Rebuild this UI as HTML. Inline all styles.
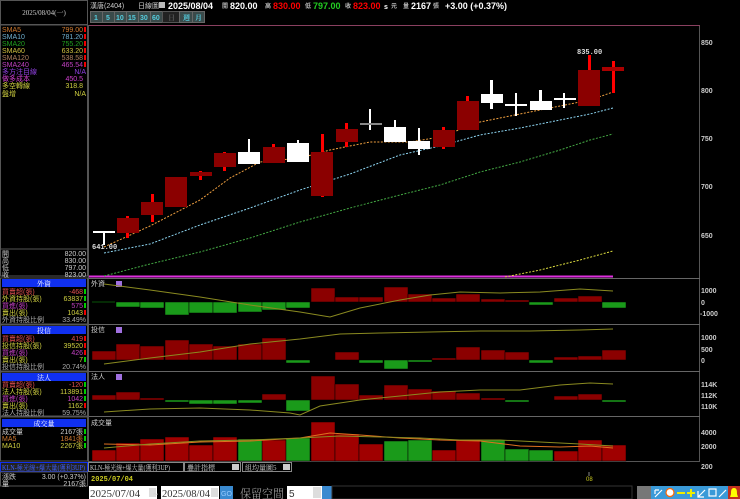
<!DOCTYPE html>
<html><head><meta charset="utf-8"><style>
html,body{margin:0;padding:0;background:#000;width:740px;height:499px;overflow:hidden}
svg{display:block}
text{font-family:"Liberation Sans","Noto Sans CJK TC",sans-serif}
.s{font-family:"Liberation Serif","Noto Serif CJK SC",serif;font-size:7px}
.m{font-family:"Liberation Mono","Noto Sans CJK TC",monospace}
</style></head><body>
<svg width="740" height="499" viewBox="0 0 740 499" xmlns="http://www.w3.org/2000/svg">
<rect width="740" height="499" fill="#000"/>
<rect x="0.5" y="0.5" width="87" height="24" fill="none" stroke="#555"/>
<text x="44" y="15" fill="#ccc" class="s" text-anchor="middle">2025/08/04(一)</text>
<rect x="0.5" y="25" width="87" height="224" fill="none" stroke="#555"/>
<g class="s">
<text x="2" y="32" fill="#d07a30">SMA5</text><text x="83" y="32" fill="#d07a30" text-anchor="end">799.00</text>
<text x="2" y="39" fill="#70b0d0">SMA10</text><text x="83" y="39" fill="#70b0d0" text-anchor="end">781.20</text>
<text x="2" y="46" fill="#20a020">SMA20</text><text x="83" y="46" fill="#20a020" text-anchor="end">755.20</text>
<text x="2" y="53" fill="#d0c040">SMA60</text><text x="83" y="53" fill="#d0c040" text-anchor="end">633.20</text>
<text x="2" y="60" fill="#b08060">SMA120</text><text x="83" y="60" fill="#b08060" text-anchor="end">538.58</text>
<text x="2" y="67" fill="#c040c0">SMA240</text><text x="83" y="67" fill="#c040c0" text-anchor="end">465.54</text>
<text x="2" y="74" fill="#9040e0">多方注目線</text><text x="86" y="74" fill="#9040e0" text-anchor="end">N/A</text>
<text x="2" y="81" fill="#d040d0">做多成本</text><text x="83" y="81" fill="#d040d0" text-anchor="end">450.5</text>
<text x="2" y="88" fill="#d0d040">多空轉線</text><text x="83" y="88" fill="#d0d040" text-anchor="end">318.8</text>
<text x="2" y="96" fill="#d0d040">盤增</text><text x="86" y="96" fill="#d0d040" text-anchor="end">N/A</text>
</g>
<g fill="#e00"><rect x="84" y="27" width="2" height="5"/><rect x="84" y="34" width="2" height="5"/><rect x="84" y="41" width="2" height="5"/><rect x="84" y="48" width="2" height="5"/><rect x="84" y="55" width="2" height="5"/><rect x="84" y="62" width="2" height="5"/></g>
<rect x="0.5" y="249" width="87" height="27" fill="none" stroke="#555"/>
<g class="s" fill="#ccc">
<text x="2" y="256">開</text><text x="86" y="256" text-anchor="end">820.00</text>
<text x="2" y="263">高</text><text x="86" y="263" text-anchor="end">830.00</text>
<text x="2" y="270">低</text><text x="86" y="270" text-anchor="end">797.00</text>
<text x="2" y="277">收</text><text x="86" y="277" text-anchor="end">823.00</text>
</g>
<rect x="0.5" y="278" width="87" height="46" fill="none" stroke="#555"/>
<rect x="2" y="279" width="84" height="8" fill="#1030f0"/>
<text x="44" y="286" fill="#fff" class="s" text-anchor="middle">外資</text>
<g class="s">
<text x="2" y="294" fill="#e05050">買賣超(張)</text><text x="83" y="294" fill="#e05050" text-anchor="end">-468</text>
<text x="2" y="301" fill="#d0d040">外資持股(張)</text><text x="83" y="301" fill="#d0d040" text-anchor="end">63837</text>
<text x="2" y="308" fill="#c040c0">買進(張)</text><text x="83" y="308" fill="#c040c0" text-anchor="end">575</text>
<text x="2" y="315" fill="#d0d040">賣出(張)</text><text x="83" y="315" fill="#d0d040" text-anchor="end">1043</text>
<text x="2" y="322" fill="#aaa">外資持股比例</text><text x="86" y="322" fill="#aaa" text-anchor="end">33.49%</text>
</g>
<g><rect x="84" y="289" width="2" height="5" fill="#0c0"/><rect x="84" y="296" width="2" height="5" fill="#0c0"/><rect x="84" y="303" width="2" height="5" fill="#0c0"/><rect x="84" y="310" width="2" height="5" fill="#e00"/></g>
<rect x="0.5" y="325" width="87" height="46" fill="none" stroke="#555"/>
<rect x="2" y="326" width="84" height="8" fill="#1030f0"/>
<text x="44" y="333" fill="#fff" class="s" text-anchor="middle">投信</text>
<g class="s">
<text x="2" y="341" fill="#e05050">買賣超(張)</text><text x="83" y="341" fill="#e05050" text-anchor="end">419</text>
<text x="2" y="348" fill="#d0d040">投信持股(張)</text><text x="83" y="348" fill="#d0d040" text-anchor="end">39520</text>
<text x="2" y="355" fill="#c040c0">買進(張)</text><text x="83" y="355" fill="#c040c0" text-anchor="end">426</text>
<text x="2" y="362" fill="#d0d040">賣出(張)</text><text x="83" y="362" fill="#d0d040" text-anchor="end">7</text>
<text x="2" y="369" fill="#aaa">投信持股比例</text><text x="86" y="369" fill="#aaa" text-anchor="end">20.74%</text>
</g>
<g><rect x="84" y="336" width="2" height="5" fill="#e00"/><rect x="84" y="343" width="2" height="5" fill="#e00"/><rect x="84" y="350" width="2" height="5" fill="#e00"/><rect x="84" y="357" width="2" height="5" fill="#0c0"/></g>
<rect x="0.5" y="372" width="87" height="44" fill="none" stroke="#555"/>
<rect x="2" y="373" width="84" height="8" fill="#1030f0"/>
<text x="44" y="380" fill="#fff" class="s" text-anchor="middle">法人</text>
<g class="s">
<text x="2" y="387" fill="#e05050">買賣超(張)</text><text x="83" y="387" fill="#e05050" text-anchor="end">-120</text>
<text x="2" y="394" fill="#d0d040">法人持股(張)</text><text x="83" y="394" fill="#d0d040" text-anchor="end">113891</text>
<text x="2" y="401" fill="#c040c0">買進(張)</text><text x="83" y="401" fill="#c040c0" text-anchor="end">1042</text>
<text x="2" y="408" fill="#d0d040">賣出(張)</text><text x="83" y="408" fill="#d0d040" text-anchor="end">1162</text>
<text x="2" y="415" fill="#aaa">法人持股比例</text><text x="86" y="415" fill="#aaa" text-anchor="end">59.75%</text>
</g>
<g><rect x="84" y="382" width="2" height="5" fill="#0c0"/><rect x="84" y="389" width="2" height="5" fill="#0c0"/><rect x="84" y="396" width="2" height="5" fill="#0c0"/><rect x="84" y="403" width="2" height="5" fill="#e00"/></g>
<rect x="0.5" y="417" width="87" height="44" fill="none" stroke="#555"/>
<rect x="2" y="419" width="84" height="8" fill="#1030f0"/>
<text x="44" y="426" fill="#fff" class="s" text-anchor="middle">成交量</text>
<g class="s">
<text x="2" y="434" fill="#ccc">成交量</text><text x="83" y="434" fill="#ccc" text-anchor="end">2167張</text>
<text x="2" y="441" fill="#d07a30">MA5</text><text x="83" y="441" fill="#d07a30" text-anchor="end">1841張</text>
<text x="2" y="448" fill="#d0d040">MA10</text><text x="83" y="448" fill="#d0d040" text-anchor="end">2267張</text>
</g>
<g><rect x="84" y="429" width="2" height="5" fill="#0c0"/><rect x="84" y="436" width="2" height="5" fill="#0c0"/><rect x="84" y="443" width="2" height="5" fill="#0c0"/></g>
<rect x="0" y="462" width="88" height="10" fill="#222"/>
<rect x="0.5" y="462.5" width="87" height="9" fill="none" stroke="#1030f0"/>
<text x="2" y="470" fill="#4060ff" class="s" textLength="83" lengthAdjust="spacingAndGlyphs">KLN-極光線+爆大量(獲利3UP)</text>
<rect x="0.5" y="472" width="87" height="14" fill="none" stroke="#555"/>
<g class="s" fill="#ccc"><text x="2" y="479">漲跌</text><text x="86" y="479" text-anchor="end">3.00 (+0.37%)</text>
<text x="2" y="486">量</text><text x="86" y="486" text-anchor="end">2167張</text></g>

<g class="s" fill="#ccc">
<text x="90" y="8">漢唐(2404)</text><text x="138" y="8">日線圖</text>
</g>
<rect x="159" y="2" width="6" height="6" fill="#bbb"/>
<g font-weight="bold" font-size="9" class="m">
<text x="168" y="9" fill="#fff">2025/08/04</text>
<text x="222" y="8" fill="#bbb" font-size="6">開</text><text x="230" y="9" fill="#fff">820.00</text>
<text x="265" y="8" fill="#bbb" font-size="6">高</text><text x="273" y="9" fill="#f00">830.00</text>
<text x="305" y="8" fill="#bbb" font-size="6">低</text><text x="313" y="9" fill="#2c2">797.00</text>
<text x="345" y="8" fill="#bbb" font-size="6">收</text><text x="353" y="9" fill="#f00">823.00</text>
<text x="384" y="9" fill="#fff" font-size="7">s</text><text x="391" y="8" fill="#bbb" font-size="6">元</text>
<text x="403" y="8" fill="#bbb" font-size="6">量</text><text x="411" y="9" fill="#fff">2167</text>
<text x="433" y="8" fill="#bbb" font-size="6">張</text><text x="445" y="9" fill="#fff">+3.00 (+0.37%)</text>
</g>
<g font-size="7" fill="#5cd" font-weight="bold">
<rect x="90" y="11" width="115" height="12" fill="#444"/>
<rect x="90.5" y="11.5" width="12" height="11" fill="#3a4a4a" stroke="#666"/><text x="94" y="20">1</text>
<rect x="102.5" y="11.5" width="12" height="11" fill="#3a4a4a" stroke="#666"/><text x="106" y="20">5</text>
<rect x="114.5" y="11.5" width="12" height="11" fill="#3a4a4a" stroke="#666"/><text x="116" y="20">10</text>
<rect x="126.5" y="11.5" width="12" height="11" fill="#3a4a4a" stroke="#666"/><text x="128" y="20">15</text>
<rect x="138.5" y="11.5" width="12" height="11" fill="#3a4a4a" stroke="#666"/><text x="140" y="20">30</text>
<rect x="150.5" y="11.5" width="12" height="11" fill="#3a4a4a" stroke="#666"/><text x="152" y="20">60</text>
<rect x="162.5" y="11.5" width="17" height="11" fill="#222" stroke="#555"/><text x="168" y="20" fill="#555" class="s">日</text>
<rect x="179.5" y="11.5" width="13" height="11" fill="#3a4a4a" stroke="#666"/><text x="183" y="20" class="s">週</text>
<rect x="192.5" y="11.5" width="12" height="11" fill="#3a4a4a" stroke="#666"/><text x="195" y="20" class="s">月</text>
</g>

<rect x="88.5" y="25.5" width="611" height="436" fill="none" stroke="#555"/>
<line x1="89" y1="25.5" x2="700" y2="25.5" stroke="#8a4060"/>
<line x1="89" y1="278.5" x2="700" y2="278.5" stroke="#666"/>
<line x1="89" y1="324.5" x2="700" y2="324.5" stroke="#666"/>
<line x1="89" y1="371.5" x2="700" y2="371.5" stroke="#666"/>
<line x1="89" y1="416.5" x2="700" y2="416.5" stroke="#666"/>
<line x1="89" y1="276.5" x2="613" y2="276.5" stroke="#e030e0" stroke-width="2"/>
<g font-size="7" fill="#ccc" class="m" font-weight="bold">
<text x="701" y="45">850</text><text x="701" y="93">800</text><text x="701" y="141">750</text><text x="701" y="189">700</text><text x="701" y="238">650</text>
<text x="701" y="293">1000</text><text x="701" y="305">0</text><text x="700" y="316">-1000</text>
<text x="701" y="340">1000</text><text x="701" y="352">500</text><text x="701" y="363">0</text>
<text x="701" y="387">114K</text><text x="701" y="398">112K</text><text x="701" y="409">110K</text>
<text x="701" y="435">4000</text><text x="701" y="449">2000</text><text x="701" y="469">200</text>
</g>
<polyline fill="none" stroke="#4a4" stroke-width="1" stroke-dasharray="2,1.5" points="104,276 150,264 200,252 250,238 300,222 350,208 400,195 440,185 480,172 520,162 560,150 590,140 613,134"/>
<polyline fill="none" stroke="#8cd4f0" stroke-width="1" stroke-dasharray="2,1.5" points="104,253 150,244 200,225 250,208 300,190 350,174 400,155 440,146 480,135 520,128 560,120 590,114 613,108"/>
<polyline fill="none" stroke="#f0a040" stroke-width="1" stroke-dasharray="2,1.5" points="104,247 150,226 200,200 230,178 260,162 300,158 330,150 370,142 410,142 440,137 480,122 520,114 560,106 590,100 613,92"/>
<polyline fill="none" stroke="#e0e040" stroke-width="1" stroke-dasharray="2,1.5" points="505,277 540,270 580,260 613,251"/>
<g fill="#8b0000">
<rect x="93" y="231" width="22" height="2" fill="#fff"/><rect x="103" y="231" width="2" height="14" fill="#fff"/>
<rect x="126" y="216" width="3" height="22" fill="#f00"/><rect x="117" y="218" width="22" height="15"/>
<rect x="151" y="194" width="3" height="28" fill="#f00"/><rect x="141" y="202" width="22" height="13"/>
<rect x="165" y="177" width="22" height="30"/>
<rect x="199" y="171" width="3" height="9" fill="#f00"/><rect x="190" y="172" width="22" height="4"/>
<rect x="223" y="152" width="3" height="19" fill="#f00"/><rect x="214" y="153" width="22" height="14"/>
<rect x="248" y="139" width="2" height="13" fill="#fff"/><rect x="238" y="152" width="22" height="12" fill="#fff"/>
<rect x="272" y="144" width="3" height="19" fill="#f00"/><rect x="263" y="147" width="22" height="16"/>
<rect x="297" y="140" width="2" height="10" fill="#fff"/><rect x="287" y="143" width="22" height="19" fill="#fff"/>
<rect x="321" y="134" width="3" height="63" fill="#f00"/><rect x="311" y="152" width="22" height="44"/>
<rect x="345" y="123" width="3" height="24" fill="#f00"/><rect x="336" y="129" width="22" height="13"/>
<rect x="369" y="109" width="2" height="21" fill="#fff"/><rect x="360" y="123" width="22" height="2" fill="#888"/>
<rect x="394" y="120" width="2" height="8" fill="#fff"/><rect x="384" y="127" width="22" height="15" fill="#fff"/>
<rect x="418" y="128" width="2" height="27" fill="#fff"/><rect x="408" y="141" width="22" height="8" fill="#fff"/>
<rect x="442" y="127" width="3" height="22" fill="#f00"/><rect x="433" y="130" width="22" height="17"/>
<rect x="466" y="96" width="3" height="6" fill="#f00"/><rect x="457" y="101" width="22" height="29"/>
<rect x="490" y="80" width="3" height="29" fill="#fff"/><rect x="481" y="94" width="22" height="9" fill="#fff"/>
<rect x="515" y="93" width="2" height="23" fill="#fff"/><rect x="505" y="104" width="22" height="2" fill="#fff"/>
<rect x="539" y="90" width="3" height="14" fill="#fff"/><rect x="530" y="101" width="22" height="9" fill="#fff"/>
<rect x="563" y="93" width="2" height="15" fill="#fff"/><rect x="554" y="98" width="22" height="2" fill="#fff"/>
<rect x="588" y="55" width="3" height="16" fill="#f00"/><rect x="578" y="70" width="22" height="36"/>
<rect x="612" y="61" width="3" height="32" fill="#f00"/><rect x="602" y="67" width="22" height="4" fill="#a00"/>
</g>
<text x="92" y="249" fill="#ddd" font-size="7" class="m" font-weight="bold">641.00</text>
<text x="577" y="54" fill="#ddd" font-size="7" class="m" font-weight="bold">835.00</text>

<g class="s" fill="#ccc">
<text x="91" y="286">外資</text><text x="91" y="332">投信</text><text x="91" y="379">法人</text><text x="91" y="425">成交量</text>
</g>
<g fill="#a070e0"><rect x="116" y="281" width="6" height="6"/><rect x="116" y="327" width="6" height="6"/><rect x="116" y="374" width="6" height="6"/></g>

<g stroke="#000" stroke-width="0.5">
<line x1="92" y1="302" x2="115" y2="302" stroke="#1a1"/>
<g fill="#1a9a1a"><rect x="116" y="302" width="24" height="5"/><rect x="140" y="302" width="24" height="6"/><rect x="165" y="302" width="24" height="13"/><rect x="189" y="302" width="24" height="11"/><rect x="213" y="302" width="24" height="11"/><rect x="238" y="302" width="24" height="10"/><rect x="262" y="302" width="24" height="8"/><rect x="286" y="302" width="24" height="6"/><rect x="529" y="302" width="24" height="3"/><rect x="602" y="302" width="24" height="6"/></g>
<g fill="#8b0000"><rect x="311" y="288" width="24" height="14"/><rect x="335" y="297" width="24" height="5"/><rect x="359" y="297" width="24" height="5"/><rect x="384" y="287" width="24" height="15"/><rect x="408" y="294" width="24" height="8"/><rect x="432" y="298" width="24" height="4"/><rect x="456" y="294" width="24" height="8"/><rect x="481" y="299" width="24" height="3"/><rect x="505" y="300" width="24" height="2"/><rect x="554" y="298" width="24" height="4"/><rect x="578" y="296" width="24" height="6"/></g>
</g>
<polyline fill="none" stroke="#8a8a20" points="104,284 150,290 200,297 250,305 300,312 330,317 360,308 400,300 430,295 460,292 500,293 540,292 580,289 613,291"/>
<g stroke="#000" stroke-width="0.5">
<g fill="#8b0000"><rect x="92" y="351" width="24" height="9"/><rect x="116" y="344" width="24" height="16"/><rect x="140" y="346" width="24" height="14"/><rect x="165" y="340" width="24" height="20"/><rect x="189" y="344" width="24" height="16"/><rect x="213" y="346" width="24" height="14"/><rect x="238" y="344" width="24" height="16"/><rect x="262" y="338" width="24" height="22"/><rect x="335" y="352" width="24" height="8"/><rect x="432" y="358" width="24" height="2"/><rect x="456" y="347" width="24" height="13"/><rect x="481" y="350" width="24" height="10"/><rect x="505" y="352" width="24" height="8"/><rect x="554" y="357" width="24" height="3"/><rect x="578" y="356" width="24" height="4"/><rect x="602" y="350" width="24" height="10"/></g>
<g fill="#1a9a1a"><rect x="286" y="360" width="24" height="3"/><rect x="359" y="360" width="24" height="3"/><rect x="384" y="360" width="24" height="9"/><rect x="408" y="360" width="24" height="2"/><rect x="529" y="360" width="24" height="3"/></g>
</g>
<polyline fill="none" stroke="#8a8a20" points="104,364 150,358 200,352 250,344 300,339 340,334 380,333 430,332 480,331 530,331 580,330 613,329"/>
<g stroke="#000" stroke-width="0.5">
<g fill="#8b0000"><rect x="92" y="395" width="24" height="5"/><rect x="116" y="392" width="24" height="8"/><rect x="140" y="398" width="24" height="2"/><rect x="262" y="394" width="24" height="6"/><rect x="311" y="376" width="24" height="24"/><rect x="335" y="384" width="24" height="16"/><rect x="359" y="395" width="24" height="5"/><rect x="384" y="385" width="24" height="15"/><rect x="408" y="389" width="24" height="11"/><rect x="432" y="391" width="24" height="9"/><rect x="456" y="393" width="24" height="7"/><rect x="481" y="398" width="24" height="2"/><rect x="554" y="396" width="24" height="4"/><rect x="578" y="394" width="24" height="6"/></g>
<g fill="#1a9a1a"><rect x="165" y="400" width="24" height="2"/><rect x="189" y="400" width="24" height="4"/><rect x="213" y="400" width="24" height="4"/><rect x="238" y="400" width="24" height="3"/><rect x="286" y="400" width="24" height="11"/><rect x="505" y="400" width="24" height="2"/><rect x="602" y="400" width="24" height="2"/></g>
</g>
<polyline fill="none" stroke="#8a8a20" points="104,412 150,409 200,408 250,410 290,413 300,415 320,406 360,400 400,396 440,392 480,390 520,390 560,385 590,383 613,384"/>
<g stroke="#000" stroke-width="0.5">
<g fill="#a00000"><rect x="92" y="450" width="24" height="11"/><rect x="116" y="443" width="24" height="18"/><rect x="140" y="439" width="24" height="22"/><rect x="165" y="437" width="24" height="24"/><rect x="189" y="445" width="24" height="16"/><rect x="213" y="437" width="24" height="24"/><rect x="262" y="440" width="24" height="21"/><rect x="311" y="422" width="24" height="39"/><rect x="335" y="434" width="24" height="27"/><rect x="359" y="444" width="24" height="17"/><rect x="432" y="450" width="24" height="11"/><rect x="456" y="440" width="24" height="21"/><rect x="554" y="451" width="24" height="10"/><rect x="578" y="440" width="24" height="21"/><rect x="602" y="445" width="24" height="16"/></g>
<g fill="#1a9a1a"><rect x="238" y="439" width="24" height="22"/><rect x="286" y="438" width="24" height="23"/><rect x="384" y="441" width="24" height="20"/><rect x="408" y="440" width="24" height="21"/><rect x="481" y="440" width="24" height="21"/><rect x="505" y="449" width="24" height="12"/><rect x="529" y="450" width="24" height="11"/></g>
</g>
<polyline fill="none" stroke="#e07020" points="104,444 150,445 200,442 250,441 300,438 330,433 360,435 400,438 440,440 480,441 520,446 560,447 590,446 613,448"/>
<polyline fill="none" stroke="#8a8a20" points="104,448 150,444 200,441 250,440 300,438 340,436 380,437 420,438 460,440 500,440 540,442 580,444 613,446"/>

<rect x="88" y="462" width="612" height="10" fill="#000"/>
<rect x="88.5" y="462.5" width="95" height="9" fill="none" stroke="#888"/>
<text x="90" y="470" fill="#ccc" class="s" textLength="80" lengthAdjust="spacingAndGlyphs">KLN-極光線+爆大量(獲利3UP)</text>
<rect x="184.5" y="462.5" width="56" height="9" fill="none" stroke="#888"/>
<text x="187" y="470" fill="#ccc" class="s">疊計指標</text><rect x="232" y="464" width="7" height="6" fill="#ccc"/>
<rect x="242.5" y="462.5" width="49" height="9" fill="none" stroke="#888"/>
<text x="245" y="470" fill="#ccc" class="s">組均量圖5</text><rect x="283" y="464" width="7" height="6" fill="#ccc"/>
<text x="91" y="481" fill="#cccc20" font-size="7" font-weight="bold" class="m">2025/07/04</text>
<text x="586" y="481" fill="#cccc20" font-size="6">08</text>
<line x1="589" y1="472" x2="589" y2="476" stroke="#888"/>
<rect x="89" y="486" width="68" height="13" fill="#fff"/><text x="90" y="497" fill="#333" class="s" style="font-size:11px">2025/07/04</text><rect x="149" y="488" width="7" height="9" fill="#ddd"/>
<text x="153" y="497" fill="#ccc" font-size="9">~</text>
<rect x="161" y="486" width="58" height="13" fill="#fff"/><text x="162" y="497" fill="#333" class="s" style="font-size:11px" textLength="48" lengthAdjust="spacingAndGlyphs">2025/08/04</text><rect x="211" y="488" width="7" height="9" fill="#ddd"/>
<rect x="220" y="486" width="13" height="13" fill="#3a8ad0"/><text x="221" y="496" fill="#9cf" font-size="7">GO</text>
<text x="240" y="498" fill="#999" class="s" style="font-size:12px" textLength="44" lengthAdjust="spacingAndGlyphs">保留空間</text>
<rect x="287" y="486" width="35" height="13" fill="#fff"/><text x="289" y="497" fill="#333" font-size="10">5</text><rect x="313" y="487" width="8" height="11" fill="#ddd"/>
<rect x="322" y="486" width="10" height="13" fill="#3a8ad0"/>
<rect x="332" y="486" width="300" height="13" fill="#000" stroke="#333"/>
<rect x="637" y="486" width="14" height="13" fill="#777"/>
<rect x="651" y="486" width="77" height="13" fill="#3a9ad8"/>
<rect x="728" y="486" width="12" height="13" fill="#c03020"/>
<g stroke="#fff" stroke-width="1.2" fill="none">
<path d="M655 497 L662 490 M655 490 h4 M655 490 v4"/>
<circle cx="670" cy="492.5" r="4" fill="#fff" stroke="#f60"/>
<line x1="677" y1="493" x2="685" y2="493" stroke="#ee0" stroke-width="2"/>
<path d="M687 493 h8 M691 489 v8" stroke="#ee0" stroke-width="2"/>
<path d="M698 497 l7 -7 M698 491 v6 h6"/>
<rect x="709" y="489" width="7" height="7"/>
<path d="M719 497 l7 -7"/>
</g>
<path d="M734 488 c-3 0 -3 3 -3 6 l-1 3 h8 l-1 -3 c0 -3 0 -6 -3 -6z" fill="#ff0"/>
</svg>
</body></html>
